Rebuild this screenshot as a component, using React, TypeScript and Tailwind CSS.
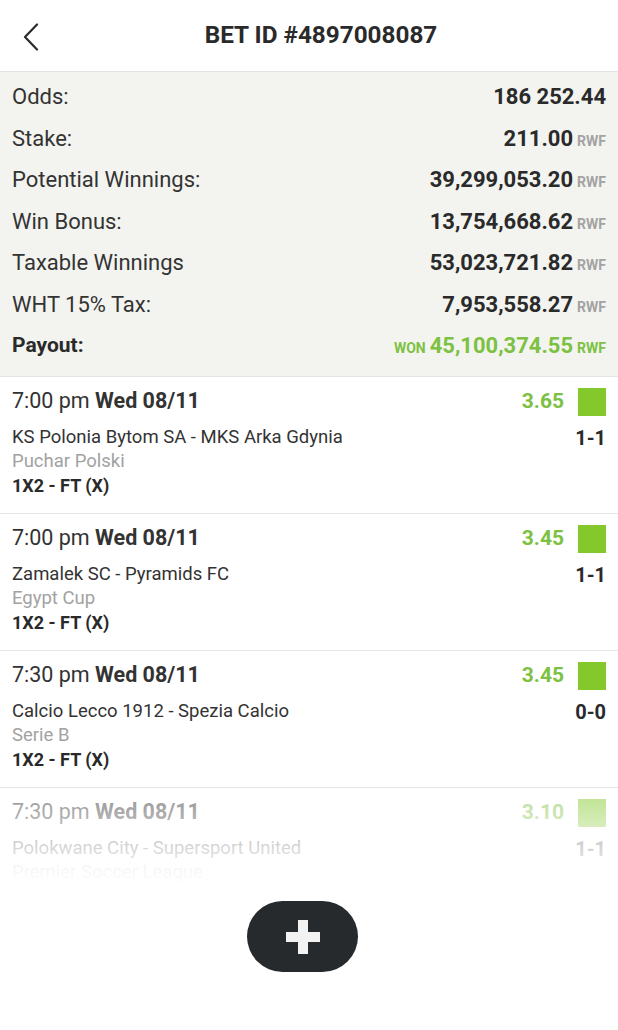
import React from "react";

const summary: { label: string; value: string; rwf?: boolean }[] = [
  { label: "Odds:", value: "186 252.44" },
  { label: "Stake:", value: "211.00", rwf: true },
  { label: "Potential Winnings:", value: "39,299,053.20", rwf: true },
  { label: "Win Bonus:", value: "13,754,668.62", rwf: true },
  { label: "Taxable Winnings", value: "53,023,721.82", rwf: true },
  { label: "WHT 15% Tax:", value: "7,953,558.27", rwf: true },
];

const matches = [
  { time: "7:00 pm", date: "Wed 08/11", odds: "3.65", teams: "KS Polonia Bytom SA - MKS Arka Gdynia", league: "Puchar Polski", market: "1X2 - FT (X)", score: "1-1" },
  { time: "7:00 pm", date: "Wed 08/11", odds: "3.45", teams: "Zamalek SC - Pyramids FC", league: "Egypt Cup", market: "1X2 - FT (X)", score: "1-1" },
  { time: "7:30 pm", date: "Wed 08/11", odds: "3.45", teams: "Calcio Lecco 1912 - Spezia Calcio", league: "Serie B", market: "1X2 - FT (X)", score: "0-0" },
  { time: "7:30 pm", date: "Wed 08/11", odds: "3.10", teams: "Polokwane City - Supersport United", league: "Premier Soccer League", market: "", score: "1-1" },
];

export default function App() {
  return (
    <div
      className="relative w-[618px] h-[1030px] bg-white text-[#2f2f2f] overflow-hidden"
      style={{ fontFamily: "Roboto, 'Noto Sans', sans-serif" }}
    >
      {/* Header */}
      <header className="relative flex items-center h-[72px] border-b border-[#e2e2e2] pl-[24px]">
        <svg className="absolute left-[22px] top-[23px]" width="18" height="28" viewBox="0 0 18 28" fill="none">
          <polyline points="15,1.5 3,14 15,26.5" stroke="#2b2b2b" strokeWidth="2.2" strokeLinecap="round" strokeLinejoin="round" />
        </svg>
        <h1 className="flex-1 text-center text-[24.3px] font-bold text-[#2a2a2a]">BET ID #4897008087</h1>
      </header>

      {/* Summary */}
      <section className="bg-[#f3f4f0] px-[12px] pt-[4px] pb-[9px] border-b border-[#e4e4e4]">
        {summary.map((r) => (
          <div key={r.label} className="flex items-center justify-between h-[41.5px]">
            <span className="text-[22px] text-[#333]">{r.label}</span>
            <span className="flex items-baseline">
              <span className="text-[22px] font-bold text-[#2a2a2a]">{r.value}</span>
              {r.rwf && <span className="ml-[4px] text-[14px] font-bold text-[#a3a3a3]">RWF</span>}
            </span>
          </div>
        ))}
        <div className="flex items-center justify-between h-[41.5px]">
          <span className="text-[21px] font-bold text-[#2a2a2a]">Payout:</span>
          <span className="flex items-baseline text-[#7dc142] font-bold">
            <span className="mr-[4px] text-[14px]">WON</span>
            <span className="text-[22px]">45,100,374.55</span>
            <span className="ml-[4px] text-[14px]">RWF</span>
          </span>
        </div>
      </section>

      {/* Matches list */}
      <div className="relative h-[509px] overflow-hidden">
        {matches.map((m, i) => (
          <div key={i} className="px-[12px] pt-[11px] pb-[15px] border-b border-[#e6e6e6]">
            <div className="flex items-center justify-between h-[28px]">
              <span className="text-[21.5px] text-[#333]">
                {m.time} <span className="font-bold">{m.date}</span>
              </span>
              <span className="flex items-center">
                <span className="text-[21px] font-bold text-[#7dc142]">{m.odds}</span>
                <span className="ml-[14px] w-[28px] h-[28px] bg-[#84c92c]" />
              </span>
            </div>
            <div className="flex justify-between items-center h-[24px] mt-[10px]">
              <span className="text-[18.5px] text-[#333]">{m.teams}</span>
              <span className="text-[20px] font-bold text-[#2a2a2a]">{m.score}</span>
            </div>
            <div className="h-[24px] flex items-center text-[18.5px] text-[#a2a2a2]">{m.league}</div>
            {m.market && (
              <div className="h-[24px] flex items-center text-[18px] font-bold text-[#2a2a2a]">{m.market}</div>
            )}
          </div>
        ))}
        <div className="absolute left-0 right-0 top-[412px] bottom-0 bg-[linear-gradient(to_bottom,rgba(255,255,255,0.45)_0px,rgba(255,255,255,0.6)_25px,rgba(255,255,255,0.82)_62px,rgba(255,255,255,0.94)_87px,#fff_97px)]" />
      </div>

      {/* Floating add button */}
      <button className="absolute left-[247px] top-[901px] w-[111px] h-[71px] rounded-full bg-[#262a2c] flex items-center justify-center">
        <svg width="34" height="34" viewBox="0 0 34 34">
          <rect x="12" y="0" width="10" height="34" fill="#f2f2f2" />
          <rect x="0" y="12" width="34" height="10" fill="#f2f2f2" />
        </svg>
      </button>
    </div>
  );
}
